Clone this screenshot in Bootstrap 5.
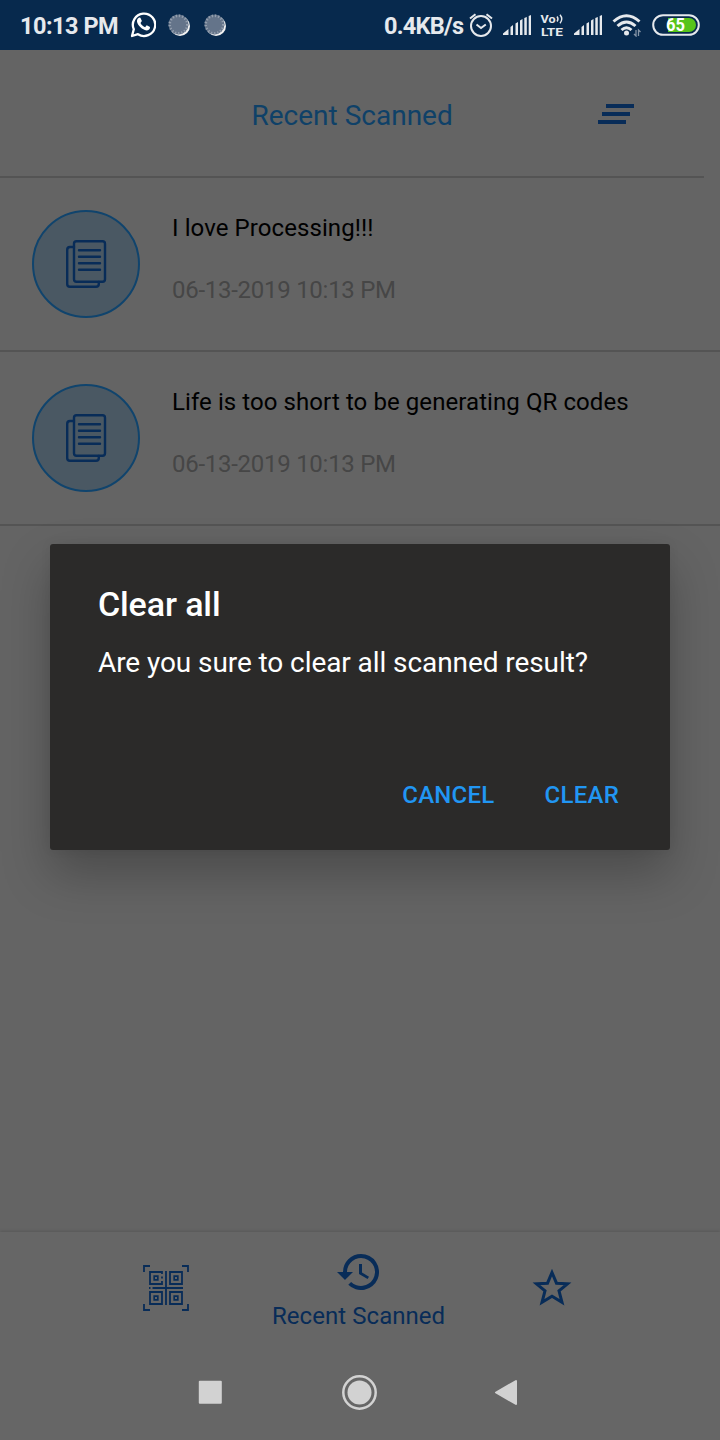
<!DOCTYPE html>
<html lang="en">
<head>
<meta charset="utf-8">
<meta name="viewport" content="width=device-width, initial-scale=1">
<title>Recent Scanned</title>
<link href="https://cdn.jsdelivr.net/npm/bootstrap@5.3.0/dist/css/bootstrap.min.css" rel="stylesheet">
<style>
  body { font-family: Roboto, "Liberation Sans", sans-serif; font-size: 24px; line-height: 28px; background: #646464; color: #000; }
  svg { display: block; flex: none; }
  .phone { width: 720px; height: 1440px; overflow: hidden; }
  .status { height: 50px; background: #07294d; color: #e6e9ed; font-weight: 700; padding-left: 20px; }
  .status > span { font-size: 23.500px; letter-spacing: -.5px; padding-top: 2px; white-space: nowrap; }
  .status > .rate { letter-spacing: -.75px; }
  .app-head { height: 126px; padding-top: 1px; }
  .app-title { font-size: 28px; color: #0f4168; margin-left: 251.500px; width: 346.500px; padding-top: 4px; }
  .rule { height: 2px; width: 704px; background: #545454; }
  .scan { height: 174px; border-bottom: 2px solid #545454; padding: 32px 32px 0; gap: 32px; }
  .avatar { width: 108px; height: 108px; border: 2px solid #10446d; background: #4a5863; flex: none; }
  .scan-text { padding-top: 4px; letter-spacing: .08px; }
  .stamp { color: #464646; margin-top: 34px; letter-spacing: -.27px; }
  .tabs { height: 112px; background: #666; margin-top: auto; box-shadow: 0 -1px 3px rgba(0,0,0,.12); color: #082c58; }
  .tab-label { line-height: 28px; margin-top: 12px; letter-spacing: .05px; }
  .keys { height: 96px; background: #666; }
  .prompt { position: absolute; left: 50px; top: 544px; width: 620px; height: 306px; border-radius: 3px; background: #2b2a29; color: #fff; padding: 40px 48px; box-shadow: 0 24px 48px rgba(0,0,0,.25), 0 0 12px rgba(0,0,0,.06); }
  .prompt h1 { font-size: 34px; line-height: 40px; font-weight: 500; margin: 0; letter-spacing: -.12px; }
  .prompt p { font-size: 28px; line-height: 36px; margin: 21px 0 0; white-space: nowrap; letter-spacing: -.08px; }
  .act { color: #2196f3; font-size: 24px; line-height: 28px; font-weight: 500; padding: 0; border: 0; background: none; letter-spacing: .25px; }
</style>
</head>
<body>
<svg width="0" height="0" class="position-absolute">
  <defs>
    <g id="bars" fill="#e6e9ed"><path d="M0 20v-1.500l5.500-4.500v6zM7.500 20v-8l2.500-2v10zM12.500 20V8.500l2.500-1.500v13zM17 20V5.500l2.500-1.500v16zM21.300 20V3l2.500-1v18zM25.700 20V1l2.300-1v20z"/></g>
    <g id="dot">
      <circle cx="12" cy="13" r="10" fill="#f2f2f2"/>
      <circle cx="10.500" cy="11.500" r="10" fill="#64748a"/>
      <circle cx="10.500" cy="11.500" r="8.800" fill="none" stroke="#949fae" stroke-width="2.600" stroke-dasharray="1.300 1.900"/>
    </g>
    <g id="docs" fill="none" stroke="#082c58" stroke-width="2.400" stroke-linecap="round" stroke-linejoin="round">
      <rect x="8" y="1.200" width="31" height="40.500" rx="2.500"/>
      <path d="M8 7H4Q1.200 7 1.200 10V44Q1.200 46.800 4 46.800H30Q32.800 46.800 32.800 44V42"/>
      <path d="M13 10.300H34M13 16.800H34M13 23.200H34M13 29.700H34"/>
    </g>
  </defs>
</svg>
<main class="phone position-relative d-flex flex-column">
  <div class="status d-flex align-items-center">
    <span style="width:110px">10:13 PM</span>
    <svg width="26" height="27" viewBox="0 1 26 27" fill="none" stroke="#fff" stroke-width="2.300"><path d="M2 25l1.800-6.700A11.200 11.200 0 1 1 8 23.200z" stroke-linejoin="round"/><path d="M9.200 6.600l1.200.2 1.500 3.300-1.400 1.900c1 2 2.600 3.400 4.600 4.200l1.600-1.900 3.300 1.600c.3 2.300-1.700 3.500-3.500 3.500-4.200-.4-8.600-4.800-9.500-8.600-.2-1.900.8-3.600 2.200-4.200z" fill="#fff" stroke="none"/></svg>
    <svg class="ms-2" width="36" height="24" viewBox="-4 0 36 24"><use href="#dot" /></svg>
    <svg width="36" height="24" viewBox="-4 0 36 24"><use href="#dot"/></svg>
    <span class="rate" style="margin-left:148px;width:85px">0.4KB/s</span>
    <svg width="24" height="26" viewBox="0 0 24 26" fill="none" stroke="#e6e9ed" stroke-width="2"><circle cx="12" cy="14" r="10"/><path d="M7.500 12.500l4.500 3.500 4.800-3.500M1 6.500l5.500-4.300M23 6.500l-5.500-4.300"/></svg>
    <svg style="margin-left:10px" width="28" height="20"><use href="#bars"/></svg>
    <svg style="margin-left:9px" width="25" height="24" viewBox="0 0 25 24" fill="#e6e9ed"><text x="0.500" y="10" font-size="10.700" font-weight="700" textLength="15" lengthAdjust="spacingAndGlyphs">Vo</text><path d="M17 3.500q2 2.500 0 5M20 1.800q3.500 4.200 0 8.400" fill="none" stroke="#e6e9ed" stroke-width="1.400"/><text x="1" y="22.500" font-size="10.700" font-weight="700" textLength="22" lengthAdjust="spacingAndGlyphs">LTE</text></svg>
    <svg style="margin-left:9px" width="28" height="20"><use href="#bars"/></svg>
    <svg style="margin-left:10px" width="30" height="24" viewBox="0 0 30 24" fill="none" stroke="#e6e9ed" stroke-width="3"><path d="M1.500 8.500Q14.500-3 27.500 8.500M5.500 13Q14.500 5 23.500 13M9.500 17Q14.500 12.500 19.500 17"/><circle cx="14.500" cy="20" r="2.500" fill="#e6e9ed" stroke="none"/><path d="M24 17v6l-2-2M26.500 23v-6l2 2" stroke="#8494a6" stroke-width="1.300"/></svg>
    <svg style="margin-left:10px" width="48" height="22" viewBox="0 0 48 22"><path d="M16 4H37a7 7 0 0 1 0 14H16z" fill="#57c41a"/><rect x="1.200" y="1.200" width="45.600" height="19.600" rx="9.800" fill="none" stroke="#e6e9ed" stroke-width="2"/><text x="14" y="17" font-size="17.500" font-weight="700" fill="#fff" textLength="19" lengthAdjust="spacingAndGlyphs">65</text></svg>
  </div>

  <header class="app-head d-flex align-items-center">
    <div class="app-title">Recent Scanned</div>
    <svg width="36" height="20" fill="#082c58"><path d="M8 0h28v4H8zM4 8h28v4H4zM0 16h28v4H0z"/></svg>
  </header>
  <div class="rule"></div>

  <section>
    <article class="scan d-flex">
      <div class="avatar rounded-circle d-flex align-items-center justify-content-center"><svg width="41" height="48"><use href="#docs"/></svg></div>
      <div class="scan-text"><div>I love Processing!!!</div><div class="stamp">06-13-2019 10:13 PM</div></div>
    </article>
    <article class="scan d-flex">
      <div class="avatar rounded-circle d-flex align-items-center justify-content-center"><svg width="41" height="48"><use href="#docs"/></svg></div>
      <div class="scan-text"><div>Life is too short to be generating QR codes</div><div class="stamp">06-13-2019 10:13 PM</div></div>
    </article>
  </section>

  <nav class="tabs d-flex">
    <svg style="margin:33px 83px 0 143px" width="46" height="46" viewBox="0 0 46 46" fill="none" stroke="#082c58" stroke-width="1.800">
      <path d="M1 7V1H7M39 1H45V7M45 39V45H39M7 45H1V39" stroke-width="1.800"/>
      <path d="M19 9V7H7V19H19V16M19 11.500v2M27 7H39V19H27zM7 27H19V39H7zM27 27H39V39H27z"/>
      <path d="M11.200 11.200h3.600v3.600h-3.600zM31.200 11.200h3.600v3.600h-3.600zM11.200 31.200h3.600v3.600h-3.600zM31.200 31.200h3.600v3.600h-3.600z" stroke-width="1.700"/>
      <path d="M23 6V40M9.500 23H40M6 23h1.500"/>
    </svg>
    <div class="d-flex flex-column" style="width:173px">
      <svg style="margin:22px 0 0 65px" width="42" height="36" viewBox="1 3 21 18" fill="#082c58"><path d="M13 3a9 9 0 0 0-9 9H1l3.890 3.890.07.14L9 12H6a7 7 0 1 1 2.060 4.940l-1.420 1.420A9 9 0 1 0 13 3zm-1 5v5l4.280 2.540.72-1.210-3.500-2.080V8z"/></svg>
      <div class="tab-label text-nowrap">Recent Scanned</div>
    </div>
    <svg style="margin:36px 0 0 87px" width="40" height="38" viewBox="0 0 40 38" fill="none" stroke="#082c58" stroke-width="3"><path d="M20 4.500L24.500 15.200L35.500 15.800L27 22.800L30 34.300L20 28.300L10 34.300L13 22.800L4.500 15.800L15.500 15.200Z"/></svg>
  </nav>
  <div class="keys d-flex align-items-center">
    <svg style="margin-left:198px" width="25" height="24"><rect x=".8" y=".8" width="23" height="23" rx="1" fill="#d2d2d2"/></svg>
    <svg style="margin-left:119px" width="35" height="36" viewBox="0 0 35 36"><circle cx="17.500" cy="18.500" r="16.200" fill="none" stroke="#d2d2d2" stroke-width="2.500"/><circle cx="17.500" cy="18.500" r="12" fill="#d2d2d2"/></svg>
    <svg style="margin-left:117px" width="24" height="28"><path d="M2 14.500L22 3V26Z" fill="#d2d2d2" stroke="#d2d2d2" stroke-width="2" stroke-linejoin="round"/></svg>
  </div>

  <div class="prompt" role="dialog">
    <h1>Clear all</h1>
    <p>Are you sure to clear all scanned result?</p>
    <div class="d-flex justify-content-end" style="gap:50px;margin:100px 3px 0 0">
      <button class="act">CANCEL</button>
      <button class="act">CLEAR</button>
    </div>
  </div>
</main>
<script src="https://cdn.jsdelivr.net/npm/bootstrap@5.3.0/dist/js/bootstrap.bundle.min.js"></script>
</body>
</html>
